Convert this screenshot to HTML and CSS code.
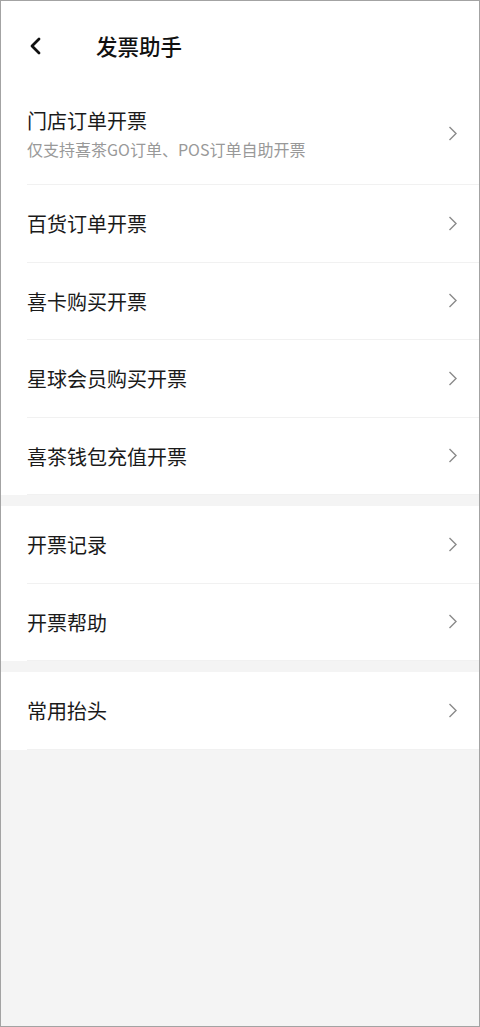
FILE: index.html
```html
<!DOCTYPE html>
<html lang="zh-CN">
<head>
<meta charset="utf-8">
<title>发票助手</title>
<link rel="stylesheet" href="styles.css">
</head>
<body>
<div class="page">
  <header class="nav">
    <span class="back">
      <svg width="14" height="18" viewBox="0 0 14 18"><path d="M11 2 L4 9 L11 16" fill="none" stroke="#111" stroke-width="2.8" stroke-linecap="round" stroke-linejoin="round"/></svg>
    </span>
    <h1 class="nav-title">发票助手</h1>
  </header>

  <section class="group">
    <div class="row row-tall">
      <div class="row-inner">
        <div class="row-text">
          <div class="row-title">门店订单开票</div>
          <div class="row-sub">仅支持喜茶GO订单、POS订单自助开票</div>
        </div>
        <svg class="chev" width="10" height="15" viewBox="0 0 10 15"><path d="M1.5 1 L8 7.5 L1.5 14" fill="none" stroke="#8a8a8a" stroke-width="1.4"/></svg>
      </div>
    </div>
    <div class="row"><div class="row-inner"><div class="row-title">百货订单开票</div><svg class="chev" width="10" height="15" viewBox="0 0 10 15"><path d="M1.5 1 L8 7.5 L1.5 14" fill="none" stroke="#8a8a8a" stroke-width="1.4"/></svg></div></div>
    <div class="row"><div class="row-inner"><div class="row-title">喜卡购买开票</div><svg class="chev" width="10" height="15" viewBox="0 0 10 15"><path d="M1.5 1 L8 7.5 L1.5 14" fill="none" stroke="#8a8a8a" stroke-width="1.4"/></svg></div></div>
    <div class="row"><div class="row-inner"><div class="row-title">星球会员购买开票</div><svg class="chev" width="10" height="15" viewBox="0 0 10 15"><path d="M1.5 1 L8 7.5 L1.5 14" fill="none" stroke="#8a8a8a" stroke-width="1.4"/></svg></div></div>
    <div class="row"><div class="row-inner"><div class="row-title">喜茶钱包充值开票</div><svg class="chev" width="10" height="15" viewBox="0 0 10 15"><path d="M1.5 1 L8 7.5 L1.5 14" fill="none" stroke="#8a8a8a" stroke-width="1.4"/></svg></div></div>
  </section>

  <section class="group">
    <div class="row"><div class="row-inner"><div class="row-title">开票记录</div><svg class="chev" width="10" height="15" viewBox="0 0 10 15"><path d="M1.5 1 L8 7.5 L1.5 14" fill="none" stroke="#8a8a8a" stroke-width="1.4"/></svg></div></div>
    <div class="row"><div class="row-inner"><div class="row-title">开票帮助</div><svg class="chev" width="10" height="15" viewBox="0 0 10 15"><path d="M1.5 1 L8 7.5 L1.5 14" fill="none" stroke="#8a8a8a" stroke-width="1.4"/></svg></div></div>
  </section>

  <section class="group">
    <div class="row"><div class="row-inner"><div class="row-title">常用抬头</div><svg class="chev" width="10" height="15" viewBox="0 0 10 15"><path d="M1.5 1 L8 7.5 L1.5 14" fill="none" stroke="#8a8a8a" stroke-width="1.4"/></svg></div></div>
  </section>
</div>
</body>
</html>
```

FILE: styles.css
```css
* { box-sizing: border-box; }
html, body { margin: 0; padding: 0; }
body {
  font-family: "Noto Sans CJK SC", "Noto Sans", sans-serif;
  color: #1a1a1a;
  background: #f4f4f4;
}
.page {
  height: 1027px;
  border: 1px solid #a3a3a3;
  background: #f4f4f4;
  display: flex;
  flex-direction: column;
  gap: 11px;
}
.nav {
  height: 90px;
  margin-bottom: -11px;
  background: #fff;
  display: flex;
  align-items: center;
  padding-left: 27px;
  padding-bottom: 1px;
}
.back {
  display: flex;
  width: 14px;
  height: 18px;
}
.nav-title {
  margin: 0 0 0 54px;
  font-size: 21.5px;
  font-weight: 500;
  line-height: 30px;
  color: #111;
}
.group {
  background: #fff;
  display: flex;
  flex-direction: column;
}
.row {
  height: 77.5px;
  padding-left: 26px;
  display: flex;
}
.row-tall {
  height: 94px;
}
.row-inner {
  flex: 1;
  display: flex;
  align-items: center;
  justify-content: space-between;
  border-bottom: 1px solid #f1f1f1;
  padding-right: 21px;
}
.row-tall .row-inner {
  padding-bottom: 8px;
}
.row-text {
  display: flex;
  flex-direction: column;
  gap: 2.5px;
}
.row-title {
  font-size: 20px;
  line-height: 28px;
  padding-top: 2px;
  color: #1a1a1a;
}
.row-text .row-title {
  padding-top: 0;
}
.row-sub {
  font-size: 16px;
  line-height: 22px;
  color: #999;
}
.chev {
  display: block;
  flex: none;
}
```
